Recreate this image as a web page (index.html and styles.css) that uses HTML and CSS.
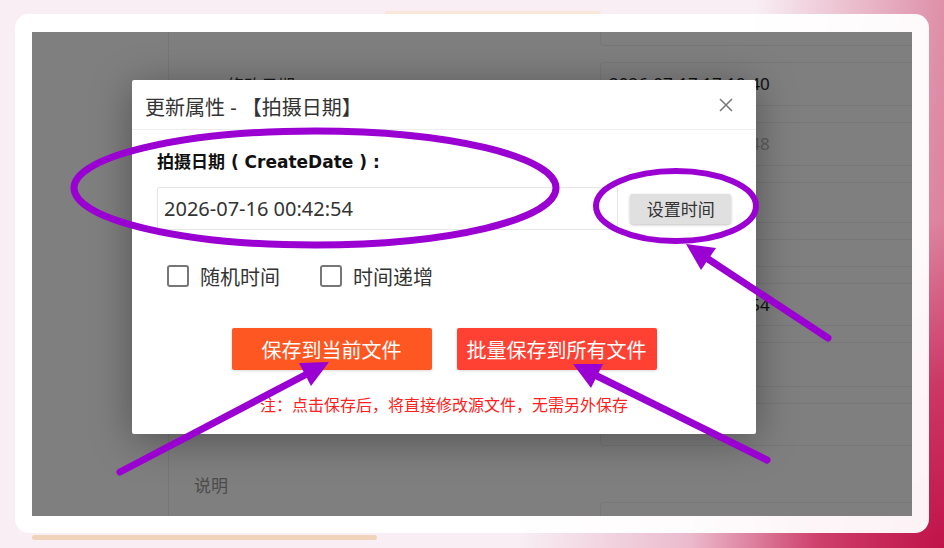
FILE: index.html
```html
<!DOCTYPE html>
<html lang="zh-CN">
<head>
<meta charset="utf-8">
<title>更新属性</title>
<link rel="stylesheet" href="styles.css">
</head>
<body>
<div class="deco deco-top"></div>
<div class="deco deco-bottom"></div>
<div class="card">
  <div class="app">
    <aside class="sidebar"></aside>
    <main class="form">
      <div class="row"><div class="lbl"></div><div class="box"></div></div>
      <div class="row"><div class="lbl lbl-indent">修改日期 <span class="tag">FileModifyDate</span></div><div class="box">2026-07-17 17:19:40</div></div>
      <div class="row"><div class="lbl"></div><div class="box box-muted">2026-07-16 00:42:48</div></div>
      <div class="row row-41"><div class="lbl"></div><div class="box"></div></div>
      <div class="row row-28"><div class="lbl"></div><div class="box"></div></div>
      <div class="row row-43"><div class="lbl"></div><div class="box">2026-07-16 00:42:54</div></div>
      <div class="row row-45"><div class="lbl"></div><div class="box"></div></div>
      <div class="row row-43"><div class="lbl"></div><div class="box"></div></div>
      <div class="row row-note"><div class="lbl lbl-plain">说明</div><div class="box box-area"></div></div>
    </main>
    <div class="mask"></div>
    <div class="dialog">
      <div class="dlg-head">
        <span class="dlg-title">更新属性 - 【拍摄日期】</span>
        <svg class="dlg-close" width="16" height="16" viewBox="0 0 16 16"><path d="M2 2L14 14M14 2L2 14" stroke="#7a7a7a" stroke-width="1.6" fill="none"/></svg>
      </div>
      <div class="dlg-body">
        <div class="field-label">拍摄日期 ( CreateDate ) :</div>
        <div class="field-row">
          <div class="date-input">2026-07-16 00:42:54</div>
          <button class="btn-set">设置时间</button>
        </div>
        <div class="checks">
          <label class="check"><span class="cbox"></span>随机时间</label>
          <label class="check"><span class="cbox"></span>时间递增</label>
        </div>
        <div class="actions">
          <button class="btn btn-save">保存到当前文件</button>
          <button class="btn btn-batch">批量保存到所有文件</button>
        </div>
        <div class="note">注：点击保存后，将直接修改源文件，无需另外保存</div>
      </div>
    </div>
  </div>
</div>
<svg class="annot" width="944" height="548" viewBox="0 0 944 548">
  <g fill="none" stroke="#9a00d2" stroke-linecap="round">
    <ellipse cx="315" cy="188" rx="241" ry="57" stroke-width="7"/>
    <ellipse cx="676" cy="206" rx="80" ry="35" stroke-width="6"/>
    <line x1="828" y1="338" x2="708" y2="259" stroke-width="7"/>
    <line x1="120" y1="472" x2="305" y2="375" stroke-width="7"/>
    <line x1="767" y1="460" x2="597" y2="376" stroke-width="7"/>
  </g>
  <g fill="#9a00d2">
    <polygon points="686,244 716,248 701,270"/>
    <polygon points="329,362 311,386 299,363"/>
    <polygon points="573,364 603,364 591,388"/>
  </g>
</svg>
</body>
</html>
```
FILE: styles.css
```css
* { box-sizing: border-box; }
html, body { margin: 0; }
body {
  width: 944px;
  height: 548px;
  overflow: hidden;
  position: relative;
  padding: 14px 15px 0;
  font-family: "Noto Sans", "Noto Sans CJK SC", sans-serif;
  color: #333;
  background:
    radial-gradient(45% 100% at 100% 100%, #c0134a 0%, rgba(200,40,90,0.85) 30%, rgba(215,110,145,0.4) 60%, rgba(248,238,244,0) 100%),
    linear-gradient(to right, rgba(248,238,244,0) 80%, #de90a9 100%),
    #f8eef4;
}
.deco { position: absolute; border-radius: 3px; }
.deco-top { left: 385px; top: 11px; width: 216px; height: 6px; background: #fbe6da; }
.deco-bottom { left: 32px; top: 535px; width: 345px; height: 5px; background: #f0d3bb; }
.card {
  position: relative;
  width: 914px;
  height: 519px;
  padding: 18px 17px 17px;
  background: rgba(255,255,255,0.95);
  border-radius: 14px;
}
.app {
  position: relative;
  width: 880px;
  height: 484px;
  overflow: hidden;
  background: #fff;
  display: flex;
  align-items: flex-start;
}
.sidebar { width: 137px; height: 100%; flex: none; border-right: 1px solid #ececec; }
.form {
  flex: none;
  width: 760px;
  margin-top: -30px;
  display: flex;
  flex-direction: column;
  gap: 16px;
}
.row { flex: none; display: grid; grid-template-columns: 431px 340px; height: 44px; }
.row-41 { height: 41px; }
.row-28 { height: 28px; }
.row-43 { height: 43px; }
.row-45 { height: 45px; }
.row-note { height: 100px; }
.lbl { font-size: 17px; color: #333; padding-top: 10px; }
.lbl-indent { padding-left: 58px; }
.lbl-plain { padding-left: 25px; padding-top: 10px; color: #999; }
.tag { margin-left: 80px; color: #aaa; font-size: 15px; }
.box {
  border: 1px solid #eee;
  border-radius: 4px;
  font-size: 17px;
  color: #222;
  padding: 9px 8px;
}
.box-muted { color: #bbb; }
.box-area { margin-top: 40px; }
.mask { position: absolute; inset: 0; background: rgba(0,0,0,0.5); }
.dialog {
  position: absolute;
  left: 100px;
  top: 48px;
  width: 624px;
  height: 354px;
  background: #fff;
  border-radius: 2px;
  box-shadow: 0 6px 40px rgba(0,0,0,0.35);
}
.dlg-head {
  height: 50px;
  border-bottom: 1px solid #eee;
  display: flex;
  align-items: center;
  justify-content: space-between;
  padding: 3px 22px 0 13px;
}
.dlg-title { font-size: 20px; color: #333; }
.dlg-close { display: block; margin-top: -3px; }
.dlg-body { padding: 20px 25px 0; }
.field-label {
  font-family: "DejaVu Sans", "Noto Sans CJK SC", sans-serif;
  font-size: 17px;
  font-weight: 700;
  color: #111;
  line-height: 24px;
}
.field-row { display: flex; align-items: center; margin-top: 13px; }
.date-input {
  width: 463px;
  height: 43px;
  border: 1px solid #e6e6e6;
  border-radius: 2px;
  font-size: 20px;
  color: #333;
  padding: 7px 6px;
}
.btn-set {
  margin-left: 12px;
  width: 101px;
  height: 30px;
  border: none;
  border-radius: 3px;
  background: #e0e0e0;
  box-shadow: 0 1px 3px rgba(0,0,0,0.25);
  font-family: inherit;
  font-size: 17px;
  color: #333;
  padding: 0;
}
.checks { display: flex; gap: 40px; margin-top: 33px; padding-left: 10px; height: 26px; align-items: center; }
.check { display: flex; align-items: center; gap: 11px; font-size: 20px; color: #333; }
.cbox { width: 22px; height: 22px; border: 2px solid #777; border-radius: 3px; background: #fff; }
.actions { display: flex; justify-content: center; gap: 25px; margin-top: 39px; }
.btn {
  width: 200px;
  height: 42px;
  border: none;
  border-radius: 2px;
  color: #fff;
  font-family: inherit;
  font-size: 20px;
  padding: 0;
  box-shadow: 0 1px 3px rgba(0,0,0,0.15);
}
.btn-save { background: #ff5722; }
.btn-batch { background: #ff4134; }
.note { text-align: center; color: #ff2020; font-size: 16px; margin-top: 25px; line-height: 20px; }
.annot { position: absolute; left: 0; top: 0; pointer-events: none; }
```
